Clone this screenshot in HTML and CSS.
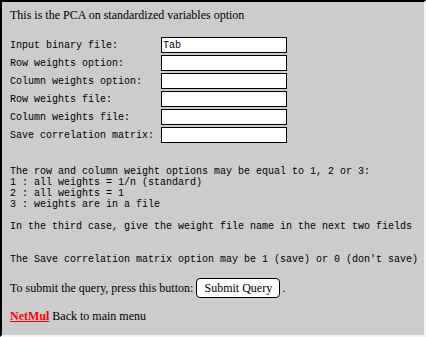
FILE: index.html
```html
<!DOCTYPE html>
<html>
<head>
<meta charset="utf-8">
<title>PCA on standardized variables</title>
<link rel="stylesheet" href="styles.css">
</head>
<body>
<div class="frame">
  <p class="title">This is the PCA on standardized variables option</p>
  <form class="form">
    <div class="fields">
      <label class="label">Input binary file:</label><input class="field" type="text" value="Tab">
      <label class="label">Row weights option:</label><input class="field" type="text">
      <label class="label">Column weights option:</label><input class="field" type="text">
      <label class="label">Row weights file:</label><input class="field" type="text">
      <label class="label">Column weights file:</label><input class="field" type="text">
      <label class="label">Save correlation matrix:</label><input class="field" type="text">
    </div>
<pre class="notes">The row and column weight options may be equal to 1, 2 or 3:
1 : all weights = 1/n (standard)
2 : all weights = 1
3 : weights are in a file

In the third case, give the weight file name in the next two fields


The Save correlation matrix option may be 1 (save) or 0 (don't save)</pre>
    <div class="submit-row">
      <span>To submit the query, press this button:</span>
      <button class="submit" type="button">Submit Query</button>
      <span class="dot">.</span>
    </div>
  </form>
  <p class="back"><a class="netmul" href="#">NetMul</a> Back to main menu</p>
</div>
</body>
</html>
```

FILE: styles.css
```css
html, body {
  margin: 0;
  padding: 0;
}

body {
  width: 426px;
  height: 337px;
  overflow: hidden;
  font-family: "Liberation Serif", serif;
  font-size: 12px;
  color: #000;
}

.frame {
  box-sizing: border-box;
  width: 426px;
  height: 337px;
  background: #cccccc;
  border: 2px solid;
  border-color: #000 #f4f4f4 #f4f4f4 #000;
  padding: 6px 8px 0 8px;
}

.title {
  margin: 0;
  line-height: 15px;
}

.form {
  margin: 14px 0 0 0;
}

.fields {
  display: grid;
  grid-template-columns: 151px 126px;
  grid-auto-rows: 16px;
  row-gap: 2px;
  align-items: center;
}

.label {
  font-family: "Liberation Mono", monospace;
  font-size: 10px;
  line-height: 11px;
  white-space: pre;
}

.field {
  box-sizing: border-box;
  width: 126px;
  height: 16px;
  margin: 0;
  border: 1px solid #000;
  background: #fff;
  padding: 0 1px;
  font-family: "Liberation Mono", monospace;
  font-size: 10px;
  color: #000;
  outline: none;
}

.notes {
  margin: 23px 0 0 0;
  font-family: "Liberation Mono", monospace;
  font-size: 10px;
  line-height: 11px;
}

.submit-row {
  display: flex;
  align-items: center;
  height: 20px;
  margin-top: 13px;
  line-height: 15px;
}

.submit {
  box-sizing: border-box;
  width: 84px;
  height: 20px;
  margin: 0 0 0 3px;
  padding: 0;
  border: 1px solid #000;
  border-radius: 4px;
  background: #fff;
  font-family: "Liberation Serif", serif;
  font-size: 12px;
  color: #000;
}

.dot {
  margin-left: 2px;
}

.back {
  margin: 11px 0 0 0;
  line-height: 15px;
}

.netmul {
  color: #ff0000;
  font-weight: bold;
  text-decoration: underline;
}
```
